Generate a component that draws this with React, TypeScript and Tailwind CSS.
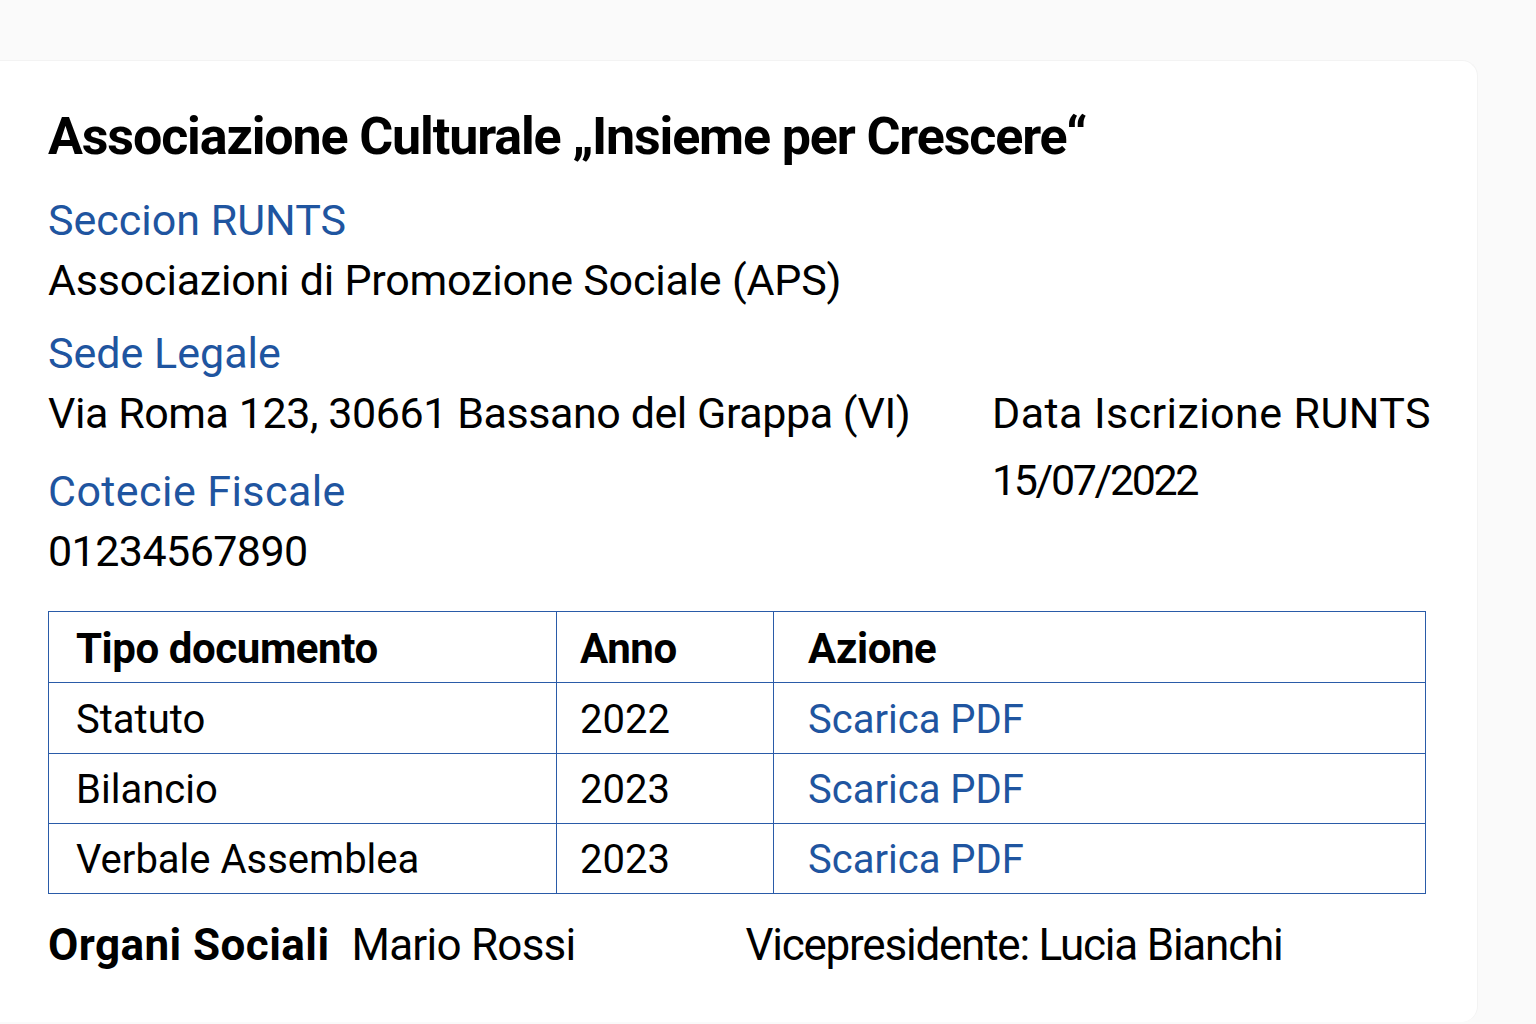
import React from "react";

const rows = [
  { tipo: "Statuto", anno: "2022", h: "h-[71px]" },
  { tipo: "Bilancio", anno: "2023", h: "h-[70px]" },
  { tipo: "Verbale Assemblea", anno: "2023", h: "h-[70px]" },
];

export default function App() {
  return (
    <div
      className="min-h-screen w-[1536px] bg-[#fafafa] pt-[60px] pr-[58px] text-black"
      style={{ fontFamily: "Roboto, 'Liberation Sans', sans-serif" }}
    >
      <div className="h-[962px] rounded-r-2xl border-t border-r border-[#f3f3f3] bg-white pl-12 pt-[56px]">
        <h1 className="text-[52px] font-bold leading-[40px] tracking-[-0.022em]">
          Associazione Culturale „Insieme per Crescere“
        </h1>

        <div className="mt-[33px] text-[43px] leading-[60px] text-[#1f55a0]">Seccion RUNTS</div>
        <div className="text-[43px] leading-[60px] tracking-[-0.005em]">
          Associazioni di Promozione Sociale (APS)
        </div>

        <div className="mt-[13px] text-[43px] leading-[60px] text-[#1f55a0]">Sede Legale</div>
        <div className="flex">
          <div className="w-[944px]">
            <div className="text-[43px] leading-[60px] tracking-[-0.01em]">
              Via Roma 123, 30661 Bassano del Grappa (VI)
            </div>
            <div className="mt-[18px] text-[43px] leading-[60px] tracking-[0.01em] text-[#1f55a0]">
              Cotecie Fiscale
            </div>
            <div className="text-[43px] leading-[60px] tracking-[-0.013em]">01234567890</div>
          </div>
          <div>
            <div className="text-[43px] leading-[60px] tracking-[0.01em]">Data Iscrizione RUNTS</div>
            <div className="mt-[7px] text-[43px] leading-[60px] tracking-[-0.055em]">15/07/2022</div>
          </div>
        </div>

        <table className="mt-[30px] w-[1378px] border-collapse text-[40px]">
          <thead>
            <tr className="h-[71px]">
              <th className="w-[508px] border-[1.5px] border-[#2a5ba8] pl-[27px] pt-[3px] text-left text-[42px] font-bold tracking-[-0.01em]">
                Tipo documento
              </th>
              <th className="w-[217px] border-[1.5px] border-[#2a5ba8] pl-[23px] pt-[3px] text-left text-[42px] font-bold tracking-[-0.01em]">
                Anno
              </th>
              <th className="border-[1.5px] border-[#2a5ba8] pl-[34px] pt-[3px] text-left text-[42px] font-bold tracking-[-0.01em]">
                Azione
              </th>
            </tr>
          </thead>
          <tbody>
            {rows.map((r) => (
              <tr key={r.tipo} className={r.h}>
                <td className="border-[1.5px] border-[#2a5ba8] pl-[27px] pt-[3px]">{r.tipo}</td>
                <td className="border-[1.5px] border-[#2a5ba8] pl-[23px] pt-[3px]">{r.anno}</td>
                <td className="border-[1.5px] border-[#2a5ba8] pl-[34px] pt-[3px] text-[#1f55a0]">Scarica PDF</td>
              </tr>
            ))}
          </tbody>
        </table>

        <div className="mt-[21px] flex items-baseline text-[44px] leading-[60px]">
          <span className="font-bold tracking-[0.01em]">Organi Sociali</span>
          <span className="ml-[22px] w-[394px] tracking-[-0.017em]">Mario Rossi</span>
          <span className="tracking-[-0.028em]">Vicepresidente: Lucia Bianchi</span>
        </div>
      </div>
    </div>
  );
}
